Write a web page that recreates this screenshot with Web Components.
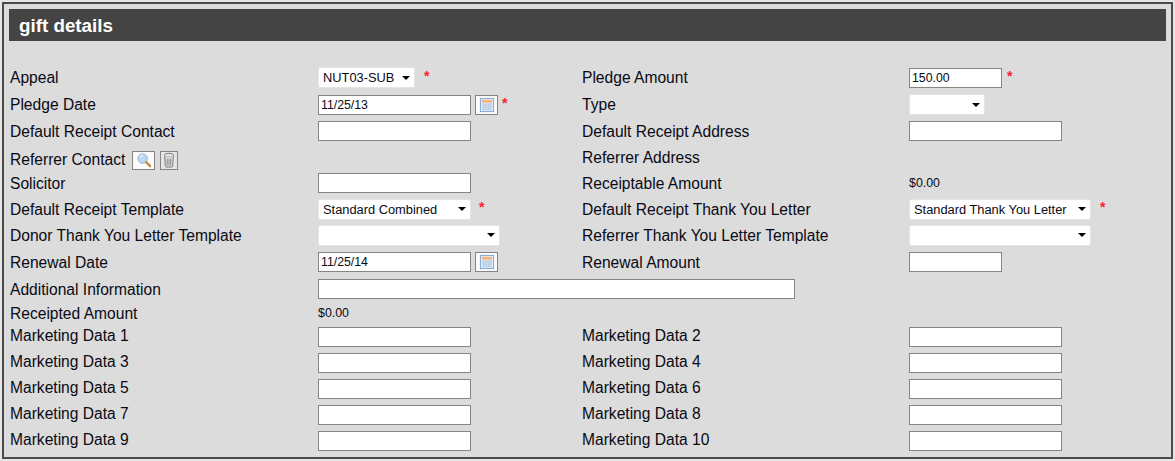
<!DOCTYPE html>
<html lang="en">
<head>
<meta charset="utf-8">
<title>gift details</title>
<style>
  html, body { margin: 0; background: #e6e6e6; }
  body { width: 1175px; height: 461px; overflow: hidden; font-family: "Liberation Sans", Arial, sans-serif; }
  .with-icons { display: flex; align-items: center; padding-top: 4px; }
</style>
</head>
<body>
<gift-panel heading="gift details">
  <gift-row h="27" lift="2">
    <span slot="l1">Appeal</span>
    <select-box slot="f1" w="97">NUT03-SUB</select-box><req-mark slot="f1" gap="9"></req-mark>
    <span slot="l2">Pledge Amount</span>
    <text-box slot="f2" w="93">150.00</text-box><req-mark slot="f2" gap="5"></req-mark>
  </gift-row>
  <gift-row h="27" lift="2">
    <span slot="l1">Pledge Date</span>
    <text-box slot="f1" w="153">11/25/13</text-box><icon-btn slot="f1" icon="calendar"></icon-btn><req-mark slot="f1" gap="4"></req-mark>
    <span slot="l2">Type</span>
    <select-box slot="f2" w="76"></select-box>
  </gift-row>
  <gift-row h="26">
    <span slot="l1">Default Receipt Contact</span>
    <text-box slot="f1" w="153"></text-box>
    <span slot="l2">Default Receipt Address</span>
    <text-box slot="f2" w="153"></text-box>
  </gift-row>
  <gift-row h="26">
    <span slot="l1" class="with-icons">Referrer Contact<icon-btn icon="search"></icon-btn><icon-btn icon="trash"></icon-btn></span>
    <span slot="l2">Referrer Address</span>
  </gift-row>
  <gift-row h="26">
    <span slot="l1">Solicitor</span>
    <text-box slot="f1" w="153"></text-box>
    <span slot="l2">Receiptable Amount</span>
    <small-value slot="f2">$0.00</small-value>
  </gift-row>
  <gift-row h="26">
    <span slot="l1">Default Receipt Template</span>
    <select-box slot="f1" w="153">Standard Combined</select-box><req-mark slot="f1" gap="8"></req-mark>
    <span slot="l2">Default Receipt Thank You Letter</span>
    <select-box slot="f2" w="182">Standard Thank You Letter</select-box><req-mark slot="f2" gap="9"></req-mark>
  </gift-row>
  <gift-row h="26">
    <span slot="l1">Donor Thank You Letter Template</span>
    <select-box slot="f1" w="182"></select-box>
    <span slot="l2">Referrer Thank You Letter Template</span>
    <select-box slot="f2" w="182"></select-box>
  </gift-row>
  <gift-row h="28">
    <span slot="l1">Renewal Date</span>
    <text-box slot="f1" w="153">11/25/14</text-box><icon-btn slot="f1" icon="calendar"></icon-btn>
    <span slot="l2">Renewal Amount</span>
    <text-box slot="f2" w="93"></text-box>
  </gift-row>
  <gift-row h="26">
    <span slot="l1">Additional Information</span>
    <text-box slot="wide" w="477"></text-box>
  </gift-row>
  <gift-row h="22">
    <span slot="l1">Receipted Amount</span>
    <small-value slot="f1">$0.00</small-value>
  </gift-row>
  <gift-row h="26" lift="4">
    <span slot="l1">Marketing Data 1</span><text-box slot="f1" w="153"></text-box>
    <span slot="l2">Marketing Data 2</span><text-box slot="f2" w="153"></text-box>
  </gift-row>
  <gift-row h="26" lift="4">
    <span slot="l1">Marketing Data 3</span><text-box slot="f1" w="153"></text-box>
    <span slot="l2">Marketing Data 4</span><text-box slot="f2" w="153"></text-box>
  </gift-row>
  <gift-row h="26" lift="4">
    <span slot="l1">Marketing Data 5</span><text-box slot="f1" w="153"></text-box>
    <span slot="l2">Marketing Data 6</span><text-box slot="f2" w="153"></text-box>
  </gift-row>
  <gift-row h="26" lift="4">
    <span slot="l1">Marketing Data 7</span><text-box slot="f1" w="153"></text-box>
    <span slot="l2">Marketing Data 8</span><text-box slot="f2" w="153"></text-box>
  </gift-row>
  <gift-row h="26" lift="4">
    <span slot="l1">Marketing Data 9</span><text-box slot="f1" w="153"></text-box>
    <span slot="l2">Marketing Data 10</span><text-box slot="f2" w="153"></text-box>
  </gift-row>
</gift-panel>

<script>
class GiftPanel extends HTMLElement {
    constructor() {
        super();
        this.attachShadow({ mode: "open" });
    }

    connectedCallback() {
        this.shadowRoot.innerHTML = `
            <style>
                :host {
                    display: block;
                    box-sizing: border-box;
                    width: 1171px;
                    height: 457px;
                    margin: 2px 0 0 2px;
                    padding: 5px 5px 0 5px;
                    border: 2px solid #4a4a4a;
                    background: #dcdcdc;
                    color: #0a0a14;
                }
                h2 {
                    margin: 0 0 23px 0;
                    height: 32px;
                    line-height: 34px;
                    padding-left: 10px;
                    background: #444444;
                    color: #ffffff;
                    font-size: 18.8px;
                    font-weight: bold;
                }
            </style>
            <h2>${this.getAttribute("heading")}</h2>
            <slot></slot>
        `;
    }
}

// una fila del formulario: etiqueta + campo, dos veces
class GiftRow extends HTMLElement {
    constructor() {
        super();
        this.attachShadow({ mode: "open" });
    }

    connectedCallback() {
        const h = this.getAttribute("h") || 26;
        const lift = this.getAttribute("lift") || 0;
        this.shadowRoot.innerHTML = `
            <style>
                :host {
                    display: grid;
                    grid-template-columns: 309px 264px 327px 1fr;
                    height: ${h}px;
                    align-items: center;
                    font-size: 15.6px;
                }
                .label { padding: 2px 0 ${lift}px 1px; white-space: nowrap; }
                .label.second { padding-left: 0; }
                .field { display: flex; align-items: center; }
                .wide { grid-column: 2 / 5; display: flex; align-items: center; }
                .wide:not(.on) { display: none; }
                .narrow.off { display: none; }
            </style>
            <div class="label"><slot name="l1"></slot></div>
            <div class="field narrow"><slot name="f1"></slot></div>
            <div class="label second narrow"><slot name="l2"></slot></div>
            <div class="field narrow"><slot name="f2"></slot></div>
            <div class="wide"><slot name="wide"></slot></div>
        `;
        if (this.querySelector('[slot="wide"]')) {
            this.shadowRoot.querySelector(".wide").classList.add("on");
            this.shadowRoot.querySelectorAll(".narrow").forEach((n) => n.classList.add("off"));
        }
    }
}

class TextBox extends HTMLElement {
    constructor() {
        super();
        this.attachShadow({ mode: "open" });
    }

    connectedCallback() {
        this.shadowRoot.innerHTML = `
            <style>
                :host {
                    display: block;
                    box-sizing: border-box;
                    width: ${this.getAttribute("w")}px;
                    height: 20px;
                    padding: 0 2px;
                    border: 1px solid #858585;
                    background: #ffffff;
                    font-size: 12.3px;
                    line-height: 18px;
                    white-space: nowrap;
                }
            </style>
            <slot></slot>
        `;
    }
}

class SelectBox extends HTMLElement {
    constructor() {
        super();
        this.attachShadow({ mode: "open" });
    }

    connectedCallback() {
        this.shadowRoot.innerHTML = `
            <style>
                :host {
                    display: flex;
                    align-items: center;
                    justify-content: space-between;
                    box-sizing: border-box;
                    width: ${this.getAttribute("w")}px;
                    height: 21px;
                    padding: 0 4px;
                    border: 1px solid #e4e4e4;
                    border-radius: 2px;
                    background: #ffffff;
                    font-size: 12.85px;
                    white-space: nowrap;
                }
                i {
                    flex: none;
                    width: 0;
                    height: 0;
                    border-left: 4px solid transparent;
                    border-right: 4px solid transparent;
                    border-top: 4px solid #000000;
                }
            </style>
            <span><slot></slot></span>
            <i></i>
        `;
    }
}

class ReqMark extends HTMLElement {
    constructor() {
        super();
        this.attachShadow({ mode: "open" });
    }

    connectedCallback() {
        const gap = this.getAttribute("gap") || 6;
        this.shadowRoot.innerHTML = `
            <style>
                :host {
                    display: block;
                    margin: -4px 0 0 ${gap}px;
                    color: #ff1a2e;
                    font-size: 14px;
                    font-weight: bold;
                    line-height: 14px;
                }
            </style>
            *
        `;
    }
}

class SmallValue extends HTMLElement {
    constructor() {
        super();
        this.attachShadow({ mode: "open" });
    }

    connectedCallback() {
        this.shadowRoot.innerHTML = `
            <style>
                :host { display: block; font-size: 12.4px; }
            </style>
            <slot></slot>
        `;
    }
}

const ICONS = {
    calendar: `
        <rect x="1.5" y="1.5" width="14" height="14" fill="#eaf1fa" stroke="#7ba2d4"/>
        <rect x="3" y="3" width="11" height="3" fill="#f5b27a"/>
        <path d="M3 7.5h11M3 9.5h11M3 11.5h11M3 13.5h11M5 7v7M7.5 7v7M10 7v7M12.5 7v7" stroke="#b4c8e3" stroke-width="1" fill="none"/>
    `,
    search: `
        <circle cx="7" cy="7" r="5" fill="#bcd7f3" stroke="#8fb0d6"/>
        <path d="M4.6 6a3 3 0 0 1 3-2.4" stroke="#ffffff" fill="none"/>
        <path d="M10.8 10.8L15 15" stroke="#c98a3c" stroke-width="2.4" stroke-linecap="round"/>
    `,
    trash: `
        <ellipse cx="8.5" cy="3.4" rx="5" ry="2" fill="#e2e2e2" stroke="#777777"/>
        <path d="M3.8 4.5l0.9 10.7a1 1 0 0 0 1 0.8h5.6a1 1 0 0 0 1-0.8l0.9-10.7" fill="#d2d2d2" stroke="#777777"/>
        <path d="M6.8 7.5v6.5M8.5 7.5v6.5M10.2 7.5v6.5" stroke="#959595"/>
    `,
};

class IconBtn extends HTMLElement {
    constructor() {
        super();
        this.attachShadow({ mode: "open" });
    }

    connectedCallback() {
        const icon = this.getAttribute("icon");
        this.shadowRoot.innerHTML = `
            <style>
                :host {
                    display: inline-flex;
                    flex: none;
                    align-items: center;
                    justify-content: center;
                    box-sizing: border-box;
                    width: 23px;
                    height: 20px;
                    margin-left: 4px;
                    border: 1px solid #858585;
                    background: #fbfbfb;
                }
                :host([icon="search"]) { margin-left: 7px; height: 19px; }
                :host([icon="trash"]) { width: 18px; height: 19px; margin-left: 5px; background: #e6e6e6; }
                svg { display: block; width: 16px; height: 16px; }
            </style>
            <svg viewBox="0 0 17 17">${ICONS[icon]}</svg>
        `;
    }
}

customElements.define("gift-panel", GiftPanel);
customElements.define("gift-row", GiftRow);
customElements.define("text-box", TextBox);
customElements.define("select-box", SelectBox);
customElements.define("req-mark", ReqMark);
customElements.define("small-value", SmallValue);
customElements.define("icon-btn", IconBtn);
</script>
</body>
</html>
